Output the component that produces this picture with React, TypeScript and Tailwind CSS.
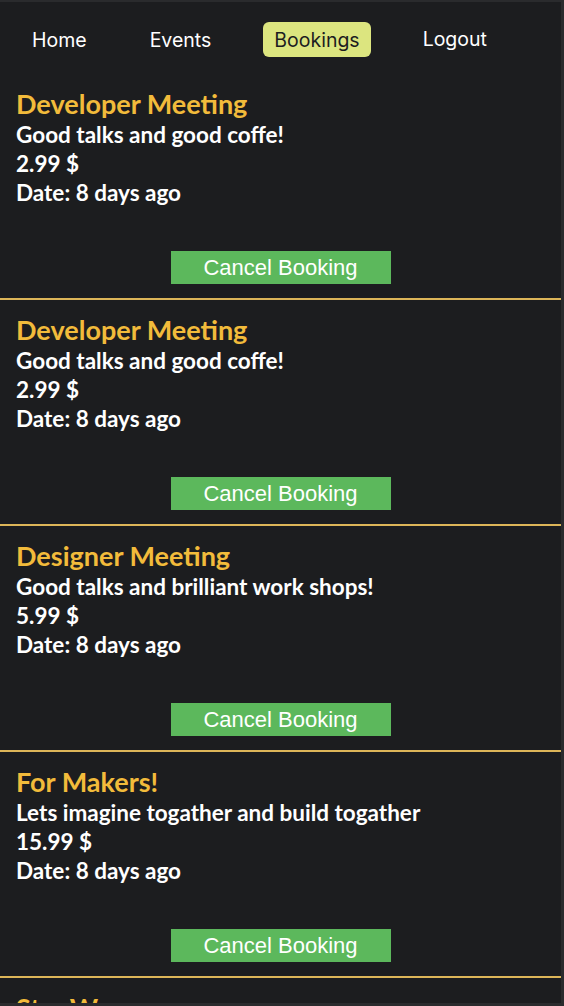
import React from "react";

const bookings = [
  { title: "Developer Meeting", desc: "Good talks and good coffe!", price: "2.99" },
  { title: "Developer Meeting", desc: "Good talks and good coffe!", price: "2.99" },
  { title: "Designer Meeting", desc: "Good talks and brilliant work shops!", price: "5.99" },
  { title: "For Makers!", desc: "Lets imagine togather and build togather", price: "15.99" },
  { title: "Star Wars", desc: "May the force be with you", price: "9.99" },
];

export default function App() {
  return (
    <div className="h-[1006px] w-[564px] overflow-hidden bg-[#2a2b2d]">
      <div className="h-[1001px] w-[561px] mt-[2px] overflow-hidden bg-[#1c1d1f]">
        <nav
          className="flex items-center gap-[41px] pl-[21px] pt-[20px] pb-[17px] text-[19.5px] text-white"
          style={{ fontFamily: "Inter, sans-serif" }}
        >
          <span className="h-[35px] px-[11px] pt-[2px] flex items-center">Home</span>
          <span className="h-[35px] px-[11px] pt-[2px] flex items-center">Events</span>
          <span className="h-[35px] px-[11px] pt-[2px] flex items-center rounded-[6px] bg-[#dce57f] text-[#1c1d1f]">
            Bookings
          </span>
          <span className="h-[35px] px-[11px] pt-[1px] flex items-center">Logout</span>
        </nav>
        {bookings.map((b, i) => (
          <div key={i} className="border-b-2 border-[#dcb558] pt-[13px] pb-[14px]">
            <div className="pl-[16px]" style={{ fontFamily: "Lato, sans-serif" }}>
              <div className="text-[27px] leading-[33px] font-bold text-[#f2bb3b]">{b.title}</div>
              <div className="text-[22.5px] leading-[29px] font-bold text-white">{b.desc}</div>
              <div className="text-[22.5px] leading-[29px] font-bold text-white">{b.price} $</div>
              <div className="text-[22.5px] leading-[29px] font-bold text-white">Date: 8 days ago</div>
            </div>
            <div className="flex justify-center mt-[44px]">
              <button
                className="w-[220px] h-[33px] bg-[#5cb85c] text-white text-[22px] leading-none"
                style={{ fontFamily: '"Liberation Sans", Arial, sans-serif' }}
              >
                Cancel Booking
              </button>
            </div>
          </div>
        ))}
      </div>
    </div>
  );
}
